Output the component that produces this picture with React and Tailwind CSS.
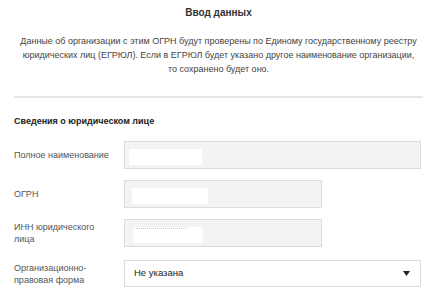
const Field = ({ label, wide, value, dashes }) => (
  <div className="flex items-center">
    <div className="w-[110px] shrink-0 pr-2 text-[9px] leading-[12px] text-[#555]">{label}</div>
    <div
      className={`relative h-[28px] shrink-0 border border-[#dcdcdc] bg-[#f2f3f3] ${wide ? "w-[297px]" : "w-[198px]"}`}
    >
      {value && <div className={`absolute top-[7px] left-[4px] h-[16px] bg-white ${value}`} />}
      {dashes && <div className="absolute top-[8px] left-[11px] w-[50px] border-t border-dotted border-[#c8c8c8]" />}
    </div>
  </div>
);

export default function App() {
  return (
    <div className="w-[437px] h-[303px] overflow-hidden bg-white font-['Liberation_Sans',Arial,sans-serif] text-[#333]">
      <h1 className="pt-[7px] text-center text-[10px] font-bold leading-[12px] text-[#333]">Ввод данных</h1>
      <p className="mt-[15px] px-[10px] text-center text-[9px] leading-[14px] text-[#444]">
        Данные об организации с этим ОГРН будут проверены по Единому государственному реестру
        <br />
        юридических лиц (ЕГРЮЛ). Если в ЕГРЮЛ будет указано другое наименование организации,
        <br />
        то сохранено будет оно.
      </p>
      <div className="mx-[14px] mt-[20px] border-t-2 border-[#e6e6e6]" />

      <div className="px-[14px] pt-[17px]">
        <h2 className="text-[9px] font-bold leading-[12px] text-[#222]">Сведения о юридическом лице</h2>
        <div className="mt-[14px] flex flex-col gap-[11px]">
          <Field label="Полное наименование" wide value="w-[73px]" />
          <Field label="ОГРН" value="w-[76px] left-[7px]" />
          <Field label={<>ИНН юридического<br />лица</>} value="w-[70px] left-[8px]" dashes />
          <div className="mt-[2px] flex items-center">
            <div className="w-[110px] shrink-0 pr-2 text-[9px] leading-[12px] text-[#555]">
              Организационно-<br />правовая форма
            </div>
            <div className="flex h-[27px] w-[297px] shrink-0 items-center justify-between border border-[#dcdcdc] bg-white pl-[9px] pr-[10px]">
              <span className="text-[9.5px] text-[#222]">Не указана</span>
              <svg width="7" height="5" viewBox="0 0 7 5">
                <path d="M0 0h7L3.5 5z" fill="#222" />
              </svg>
            </div>
          </div>
        </div>
      </div>
    </div>
  );
}
